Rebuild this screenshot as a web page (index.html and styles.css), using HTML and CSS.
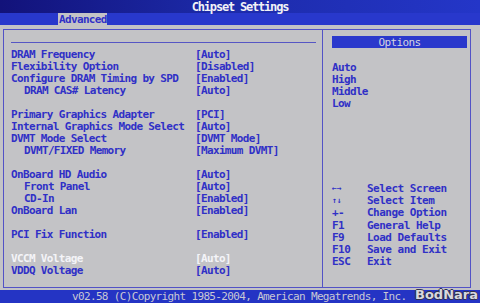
FILE: index.html
```html
<!DOCTYPE html>
<html lang="en">
<head>
    <meta charset="UTF-8">
    <title>Chipset Settings</title>
    <link rel="stylesheet" href="styles.css">
</head>
<body>
    <div class="title">Chipset Settings</div>
    <div class="tabs"><span class="tab">Advanced</span></div>

    <div class="main">
        <div class="frame">
            <div class="settings">
                <div class="rule"></div>
                <div class="row"><span>DRAM Frequency</span><span>[Auto]</span></div>
                <div class="row"><span>Flexibility Option</span><span>[Disabled]</span></div>
                <div class="row"><span>Configure DRAM Timing by SPD</span><span>[Enabled]</span></div>
                <div class="row sub"><span>DRAM CAS# Latency</span><span>[Auto]</span></div>
                <div class="gap"></div>
                <div class="row"><span>Primary Graphics Adapter</span><span>[PCI]</span></div>
                <div class="row"><span>Internal Graphics Mode Select</span><span>[Auto]</span></div>
                <div class="row"><span>DVMT Mode Select</span><span>[DVMT Mode]</span></div>
                <div class="row sub"><span>DVMT/FIXED Memory</span><span>[Maximum DVMT]</span></div>
                <div class="gap"></div>
                <div class="row"><span>OnBoard HD Audio</span><span>[Auto]</span></div>
                <div class="row sub"><span>Front Panel</span><span>[Auto]</span></div>
                <div class="row sub"><span>CD-In</span><span>[Enabled]</span></div>
                <div class="row"><span>OnBoard Lan</span><span>[Enabled]</span></div>
                <div class="gap"></div>
                <div class="row"><span>PCI Fix Function</span><span>[Enabled]</span></div>
                <div class="gap"></div>
                <div class="row active"><span>VCCM Voltage</span><span>[Auto]</span></div>
                <div class="row"><span>VDDQ Voltage</span><span>[Auto]</span></div>
            </div>

            <div class="help">
                <div class="options-head">Options</div>
                <div class="choices">
                    <div>Auto</div>
                    <div>High</div>
                    <div>Middle</div>
                    <div>Low</div>
                </div>
                <div class="keys">
                    <span class="arrows">&larr;&rarr;</span><span>Select Screen</span>
                    <span class="arrows">&uarr;&darr;</span><span>Select Item</span>
                    <span>+-</span><span>Change Option</span>
                    <span>F1</span><span>General Help</span>
                    <span>F9</span><span>Load Defaults</span>
                    <span>F10</span><span>Save and Exit</span>
                    <span>ESC</span><span>Exit</span>
                </div>
            </div>
        </div>
    </div>

    <div class="footer">
        <span>v02.58 (C)Copyright 1985-2004, American Megatrends, Inc.</span>
        <span class="mark">BodNara</span>
    </div>
</body>
</html>
```

FILE: styles.css
```css
* {
    margin: 0;
    padding: 0;
    box-sizing: border-box;
}

body {
    width: 480px;
    height: 303px;
    overflow: hidden;
    background: #c3c3c6;
    font-family: 'DejaVu Sans Mono', 'Liberation Mono', monospace;
    font-weight: bold;
    font-size: 11px;
    letter-spacing: -0.65px;
    color: #3030c6;
}

.title {
    height: 13px;
    line-height: 14px;
    text-align: center;
    color: #f2f2f6;
    font-size: 12px;
    letter-spacing: -1.2px;
    background: linear-gradient(90deg, #12127a 0%, #1c2aa8 45%, #2436c8 100%);
}

.tabs {
    height: 12px;
    padding-left: 58px;
    background: #2838cc;
}

.tab {
    display: inline-block;
    width: 49px;
    height: 12px;
    line-height: 13px;
    padding-left: 1px;
    background: #c3c3c6;
    color: #3030c6;
}

.main {
    height: 265px;
    padding: 4px 9px 2px 3px;
}

.frame {
    height: 100%;
    border: 1px solid #5252c6;
    display: grid;
    grid-template-columns: 319px 1fr;
}

.settings {
    border-right: 1px solid #5252c6;
    padding: 12px 0 0 7px;
}

.rule {
    height: 1px;
    width: 305px;
    background: #5656c4;
    margin-bottom: 6px;
}

.row {
    display: grid;
    grid-template-columns: 186px 1fr;
    height: 12px;
    line-height: 12px;
    white-space: nowrap;
}

.row span:last-child {
    margin-left: -2px;
}

.row.sub span:first-child {
    padding-left: 13px;
}

.row.active {
    color: #f4f4f8;
}

.gap {
    height: 12px;
}

.help {
    padding: 6px 3px 0 9px;
}

.options-head {
    height: 12px;
    line-height: 13px;
    text-align: center;
    background: #2a38cc;
    color: #d4d4e0;
    font-weight: normal;
}

.choices {
    margin-top: 14px;
    line-height: 12px;
}

.keys {
    margin-top: 73px;
    display: grid;
    grid-template-columns: 35px 1fr;
    line-height: 12.2px;
    letter-spacing: -0.5px;
    white-space: nowrap;
}

.arrows {
    font-size: 8px;
    letter-spacing: 0;
}

.footer {
    position: relative;
    height: 13px;
    line-height: 13px;
    padding-left: 72px;
    background: #2434c4;
    color: #c8c8d4;
    font-weight: normal;
    letter-spacing: -0.65px;
    white-space: nowrap;
}

.mark {
    position: absolute;
    right: 2px;
    bottom: 0;
    line-height: 16px;
    font-family: 'DejaVu Sans', sans-serif;
    font-weight: bold;
    font-size: 13px;
    letter-spacing: 0;
    color: #d8d8e0;
    text-shadow: -1px 0 #33334a, 1px 0 #33334a, 0 -1px #33334a, 0 1px #33334a;
}
```
